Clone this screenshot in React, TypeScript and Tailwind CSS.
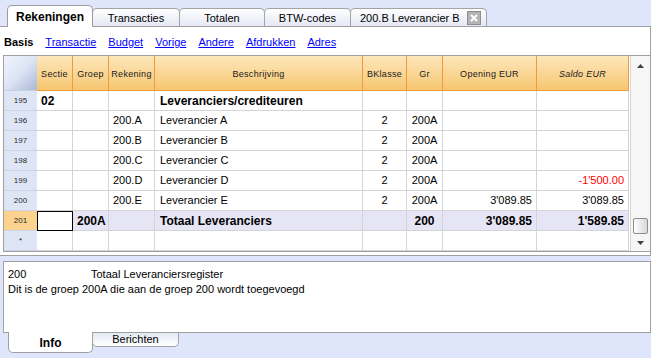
import React from 'react';

type Row = {
  nr: string;
  sectie?: string;
  groep?: string;
  rekening?: string;
  beschrijving?: string;
  bklasse?: string;
  gr?: string;
  opening?: string;
  saldo?: string;
  bold?: boolean;
  red?: boolean;
  selected?: boolean;
};

const rows: Row[] = [
  { nr: '195', sectie: '02', beschrijving: 'Leveranciers/crediteuren', bold: true },
  { nr: '196', rekening: '200.A', beschrijving: 'Leverancier A', bklasse: '2', gr: '200A' },
  { nr: '197', rekening: '200.B', beschrijving: 'Leverancier B', bklasse: '2', gr: '200A' },
  { nr: '198', rekening: '200.C', beschrijving: 'Leverancier C', bklasse: '2', gr: '200A' },
  { nr: '199', rekening: '200.D', beschrijving: 'Leverancier D', bklasse: '2', gr: '200A', saldo: "-1'500.00", red: true },
  { nr: '200', rekening: '200.E', beschrijving: 'Leverancier E', bklasse: '2', gr: '200A', opening: "3'089.85", saldo: "3'089.85" },
  { nr: '201', groep: '200A', beschrijving: 'Totaal Leveranciers', gr: '200', opening: "3'089.85", saldo: "1'589.85", bold: true, selected: true },
  { nr: '*' },
];

const headers = ['Sectie', 'Groep', 'Rekening', 'Beschrijving', 'BKlasse', 'Gr', 'Opening EUR', 'Saldo EUR'];

const TopTab: React.FC<{ label: string; active?: boolean; close?: boolean; width: string }> = ({ label, active, close, width }) =>
  active ? (
    <div className={`${width} h-[22px] -mb-px bg-white border border-b-0 border-[#9c9c9c] rounded-t-[5px] flex items-center justify-center font-bold text-[12px] relative z-10`}>
      {label}
    </div>
  ) : (
    <div className={`${width} h-[18px] -ml-px bg-gradient-to-b from-[#ffffff] to-[#e4e8f4] border border-b-0 border-[#a4a4a4] rounded-t-[5px] flex items-center pt-px ${close ? 'pl-[9px] gap-[7px]' : 'justify-center'}`}>
      <span>{label}</span>
      {close && (
        <span className="w-[14px] h-[14px] bg-[#b4b4b4] border border-[#8e8e8e] flex items-center justify-center">
          <svg width="8" height="8" viewBox="0 0 8 8">
            <path d="M1 1 L7 7 M7 1 L1 7" stroke="#ffffff" strokeWidth="2" />
          </svg>
        </span>
      )}
    </div>
  );

const App: React.FC = () => {
  return (
    <div className="w-[651px] h-[358px] bg-[#dfe6fc] font-['Liberation_Sans',Arial,sans-serif] text-[11px] text-black flex flex-col overflow-hidden">
      {/* Top tabs */}
      <div className="h-[26px] flex items-end pl-[7px]">
        <TopTab label="Rekeningen" active width="w-[86px]" />
        <TopTab label="Transacties" width="w-[88px]" />
        <TopTab label="Totalen" width="w-[86px]" />
        <TopTab label="BTW-codes" width="w-[87px]" />
        <TopTab label="200.B Leverancier B" close width="w-[137px]" />
      </div>

      {/* Main panel */}
      <div className="h-[230px] bg-white border-t border-r border-b border-[#a0a0a0] flex flex-col">
        <div className="h-[28px] flex items-center gap-[12px] pl-[4px] pt-[2px]">
          <span className="font-bold">Basis</span>
          {['Transactie', 'Budget', 'Vorige', 'Andere', 'Afdrukken', 'Adres'].map((l) => (
            <span key={l} className="text-[#0000ff] underline">{l}</span>
          ))}
        </div>

        <div className="ml-[3px] h-[197px] border-t border-l border-b border-[#a0a0a0] flex">
          <div className="w-[626px] grid grid-cols-[33px_36px_36px_46px_208px_44px_36px_94px_92px] grid-rows-[35px_repeat(8,20px)] content-start">
            {/* header */}
            <div className="bg-gradient-to-br from-[#f1f4fd] via-[#dce4f5] to-[#aab8d4] border-b border-[#c6cfe2]" />
            {headers.map((h) => (
              <div
                key={h}
                className={`bg-gradient-to-b from-[#fde7bb] to-[#f6c66f] border-r border-b border-[#f09a3c] flex items-center justify-center pt-[3px] text-[9px] tracking-[0.3px] text-[#1a1a1a] ${h === 'Saldo EUR' ? 'italic' : ''}`}
              >
                {h}
              </div>
            ))}

            {rows.map((r) => {
              const bg = r.selected ? 'bg-[#e5e5f5]' : 'bg-white';
              const cell = `border-r border-b border-[#d4d4d4] flex items-center ${bg} ${r.bold ? 'font-bold text-[12px]' : ''}`;
              return (
                <React.Fragment key={r.nr}>
                  <div className={`flex items-center justify-center text-[8px] text-[#2a2a2a] border-b border-[#c9d2e6] ${r.selected ? 'bg-[#fbd28e]' : 'bg-[#dee6f6]'}`}>
                    {r.nr}
                  </div>
                  <div className={r.selected ? 'border border-black bg-white' : `${cell} pl-[4px]`}>{r.sectie}</div>
                  <div className={`${cell} pl-[4px]`}>{r.groep}</div>
                  <div className={`${cell} pl-[4px]`}>{r.rekening}</div>
                  <div className={`${cell} pl-[5px]`}>{r.beschrijving}</div>
                  <div className={`${cell} justify-center`}>{r.bklasse}</div>
                  <div className={`${cell} justify-center`}>{r.gr}</div>
                  <div className={`${cell} justify-end pr-[4px]`}>{r.opening}</div>
                  <div className={`${cell} justify-end pr-[4px] ${r.red ? 'text-[#ff0000]' : ''}`}>{r.saldo}</div>
                </React.Fragment>
              );
            })}
          </div>

          {/* Scrollbar */}
          <div className="flex-1 bg-[#f6f6f6] border-l border-[#d6d6d6] flex flex-col items-center">
            <svg className="mt-[8px]" width="7" height="4" viewBox="0 0 7 4">
              <path d="M0 4 L3.5 0 L7 4 Z" fill="#404040" />
            </svg>
            <div className="flex-1" />
            <div className="w-[15px] h-[16px] rounded-[2px] border border-[#8e8e8e] bg-gradient-to-r from-[#ffffff] to-[#d8d8d8]" />
            <svg className="mt-[7px] mb-[6px]" width="7" height="4" viewBox="0 0 7 4">
              <path d="M0 0 L3.5 4 L7 0 Z" fill="#404040" />
            </svg>
          </div>
        </div>
      </div>

      {/* Info panel */}
      <div className="mt-[5px] ml-[3px] w-[648px] h-[72px] bg-white border border-[#a0a0a0] px-[4px] pt-[5px] leading-[15px]">
        <div className="flex">
          <span className="w-[83px]">200</span>
          <span>Totaal Leveranciersregister</span>
        </div>
        <div>Dit is de groep 200A die aan de groep 200 wordt toegevoegd</div>
      </div>

      {/* Bottom tabs */}
      <div className="flex items-start pl-[8px]">
        <div className="w-[85px] h-[21px] -mt-px bg-white border border-t-0 border-[#a0a0a0] rounded-b-[5px] flex items-center justify-center pt-[2px] font-bold text-[12px]">
          Info
        </div>
        <div className="w-[87px] h-[14px] -ml-px bg-gradient-to-t from-[#ffffff] to-[#e4e8f4] border border-t-0 border-[#a4a4a4] rounded-b-[5px] flex items-center justify-center pb-px">
          Berichten
        </div>
      </div>
    </div>
  );
};

export default App;
